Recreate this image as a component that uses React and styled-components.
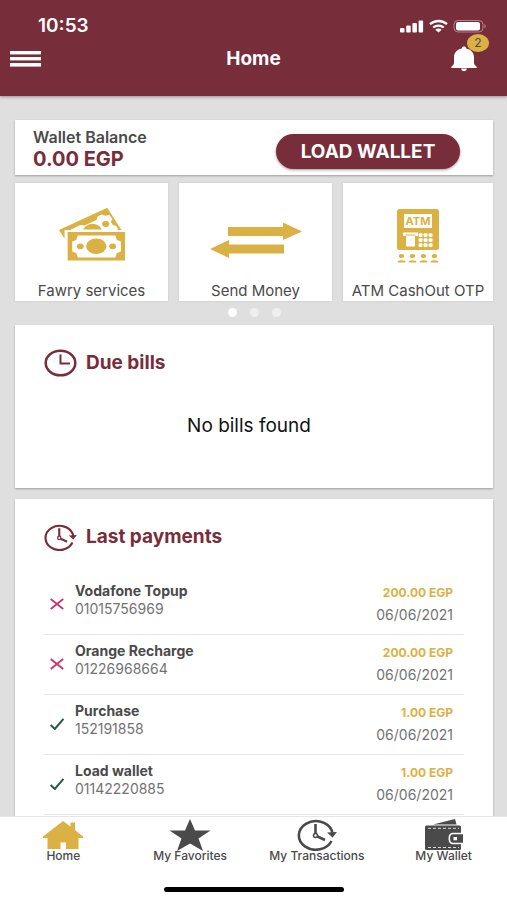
import React from "react";
import styled, { createGlobalStyle, ThemeProvider } from "styled-components";

const theme = {
  maroon: "#782d3b",
  gold: "#dcb143",
  dark: "#4a4a4a",
  gray: "#737373",
  line: "#e6e6e6",
  page: "#dfdfdf",
};

const GlobalStyle = createGlobalStyle`
  * {
    box-sizing: border-box;
  }
  body {
    margin: 0;
    background-color: ${theme.page};
    font-family: Inter, "Liberation Sans", sans-serif;
  }
  button {
    border: 0;
    padding: 0;
    background: none;
    font-family: inherit;
    cursor: pointer;
  }
  svg {
    display: block;
    flex: none;
  }
`;

const Screen = styled.div`
  display: flex;
  flex-direction: column;
  height: 100vh;
  overflow: hidden;
`;

const Header = styled.header`
  flex: none;
  padding: 14px 18px 16px 10px;
  background-color: ${({ theme }) => theme.maroon};
  color: #fff;
  box-shadow: 0 1px 3px rgba(0, 0, 0, 0.35);
`;

const StatusBar = styled.div`
  display: flex;
  align-items: center;
  justify-content: space-between;
  height: 24px;
  padding: 0 2px 0 28px;
  font-size: 19px;
  font-weight: 600;
  line-height: 24px;
`;

const StatusIcons = styled.div`
  display: flex;
  gap: 5px;
`;

const TitleBar = styled.div`
  display: grid;
  grid-template-columns: 40px 1fr 40px;
  align-items: center;
  height: 42px;
`;

const Title = styled.h1`
  margin: 0;
  padding-left: 8px;
  font-size: 19px;
  font-weight: 700;
  line-height: 24px;
  text-align: center;
`;

const BellButton = styled.button`
  position: relative;
  justify-self: end;
  padding-right: 12px;
`;

const Badge = styled.span`
  position: absolute;
  top: -12px;
  right: 0;
  width: 22px;
  height: 18px;
  border-radius: 50%;
  background-color: ${({ theme }) => theme.gold};
  color: ${({ theme }) => theme.dark};
  font-size: 12px;
  line-height: 18px;
  text-align: center;
`;

const Content = styled.main`
  flex: 1;
  min-height: 0;
  overflow: hidden;
  padding: 24px 14px 0 15px;
`;

const Card = styled.section`
  background-color: #fff;
  box-shadow: 0 1px 2px rgba(0, 0, 0, 0.3);
`;

const Balance = styled(Card)`
  display: flex;
  align-items: center;
  justify-content: space-between;
  height: 55px;
  padding: 2px 33px 0 18px;
`;

const BalanceLabel = styled.div`
  color: ${({ theme }) => theme.dark};
  font-size: 16px;
  font-weight: 600;
  line-height: 20px;
`;

const BalanceAmount = styled.div`
  color: ${({ theme }) => theme.maroon};
  font-size: 20px;
  font-weight: 700;
  line-height: 24px;
`;

const LoadButton = styled.button`
  width: 184px;
  height: 35px;
  margin-top: 6px;
  border-radius: 18px;
  background-color: ${({ theme }) => theme.maroon};
  color: #fff;
  font-size: 19px;
  font-weight: 700;
  box-shadow: 0 1px 3px rgba(0, 0, 0, 0.4);
`;

const Tiles = styled.div`
  display: grid;
  grid-template-columns: 153fr 153fr 150fr;
  gap: 11px;
  margin-top: 8px;
`;

const Tile = styled.button`
  display: flex;
  flex-direction: column;
  align-items: center;
  height: 118px;
  padding-top: 24px;
  background-color: #fff;
  box-shadow: 0 0 2px rgba(0, 0, 0, 0.12);
  color: ${({ theme }) => theme.dark};
  font-size: 15px;
  line-height: 20px;
  white-space: nowrap;
  svg {
    margin-bottom: 18px;
  }
`;

const Dots = styled.div`
  display: flex;
  justify-content: center;
  gap: 13px;
  padding: 7px 0 8px;
`;

const Dot = styled.span`
  width: 9px;
  height: 9px;
  border-radius: 50%;
  background-color: ${({ $active }) => ($active ? "#fff" : "#efefef")};
`;

const DueBills = styled(Card)`
  height: 163px;
  padding: 21px 29px;
`;

const Payments = styled(Card)`
  margin-top: 11px;
  padding: 21px 29px;
`;

const CardTitle = styled.h2`
  display: flex;
  align-items: center;
  gap: 9px;
  height: 34px;
  margin: 0;
  color: ${({ theme }) => theme.maroon};
  font-size: 19px;
  font-weight: 700;
  line-height: 24px;
`;

const Empty = styled.p`
  margin: 34px 0 0;
  padding-right: 10px;
  color: #111;
  font-size: 19px;
  line-height: 24px;
  text-align: center;
`;

const List = styled.ul`
  margin: 21px 0 0;
  padding: 0;
  list-style: none;
`;

const Row = styled.li`
  display: flex;
  height: 60px;
  padding: 7px 11px 0 6px;
  border-bottom: 1px solid ${({ theme }) => theme.line};
  svg {
    margin: 16px 11px 0 0;
  }
`;

const RowText = styled.div`
  flex: 1;
`;

const RowSide = styled.div`
  padding-top: 2px;
  text-align: right;
`;

const Name = styled.div`
  color: ${({ theme }) => theme.dark};
  font-size: 14px;
  font-weight: 700;
  line-height: 18px;
`;

const Detail = styled.div`
  color: ${({ theme }) => theme.gray};
  font-size: 14px;
  line-height: 18px;
`;

const Amount = styled.div`
  color: ${({ theme }) => theme.gold};
  font-size: 12px;
  font-weight: 700;
  line-height: 18px;
`;

const PayDate = styled(Detail)`
  line-height: 26px;
`;

const TabBar = styled.nav`
  position: relative;
  flex: none;
  display: grid;
  grid-template-columns: repeat(4, 1fr);
  height: 84px;
  padding-top: 4px;
  border-top: 1px solid ${({ theme }) => theme.line};
  background-color: #fff;
`;

const Tab = styled.button`
  display: flex;
  flex-direction: column;
  align-items: center;
  align-self: start;
  color: ${({ theme }) => theme.dark};
  font-size: 12px;
  font-weight: 500;
  line-height: 14px;
  svg {
    color: ${({ theme, $active }) => ($active ? theme.gold : theme.dark)};
  }
`;

const TabIcon = styled.span`
  display: flex;
  align-items: center;
  height: 28px;
`;

const HomeIndicator = styled.span`
  position: absolute;
  bottom: 8px;
  left: 50%;
  width: 180px;
  height: 5px;
  margin-left: -90px;
  border-radius: 3px;
  background-color: #000;
`;

const SignalIcon = () => (
  <svg width="24" height="14" viewBox="0 0 24 14" fill="#fff">
    <rect x="0" y="9" width="4.5" height="4.5" rx="1" />
    <rect x="6.2" y="6.5" width="4.5" height="7" rx="1" />
    <rect x="12.4" y="4" width="4.5" height="9.5" rx="1" />
    <rect x="18.6" y="1.5" width="4.5" height="12" rx="1" />
  </svg>
);

const WifiIcon = () => (
  <svg width="19" height="14" viewBox="0 0 19 14" fill="none" stroke="#fff">
    <path d="M1 5.2C5.8.9 13.2.9 18 5.2" strokeWidth="2.3" />
    <path d="M4.2 8.5c3-2.6 7.6-2.6 10.6 0" strokeWidth="2.2" />
    <path d="M9.5 13.5L6.3 10.7c1.9-1.5 4.5-1.5 6.4 0z" fill="#fff" stroke="none" />
  </svg>
);

const BatteryIcon = () => (
  <svg width="34" height="14" viewBox="0 0 34 14">
    <rect x="1" y="1.5" width="29" height="11.5" rx="4" fill="none" stroke="#fff" strokeOpacity=".4" />
    <rect x="3" y="3" width="24" height="8.5" rx="2.2" fill="#fff" />
    <path d="M31.5 5.2c1.5.5 1.5 3.6 0 4.1z" fill="#fff" fillOpacity=".5" />
  </svg>
);

const MenuIcon = () => (
  <svg width="31" height="18" viewBox="0 0 31 18" fill="#fff">
    <rect y="1" width="31" height="3.4" />
    <rect y="7" width="31" height="3.4" />
    <rect y="13" width="31" height="3.6" />
  </svg>
);

const BellIcon = () => (
  <svg width="26" height="26" viewBox="0 0 26 26" fill="#fff">
    <path d="M10.8 2.5C10.8-.1 15.2-.1 15.2 2.5 20 3.4 23 6.5 23 11.5v5.2c0 1.8 1 2.5 2.7 4V22H.3v-1.3c1.7-1.5 2.7-2.2 2.7-4v-5.2C3 6.5 6 3.4 10.8 2.5z" />
    <path d="M10.2 22.5h5.600c0 3.500-5.600 3.500-5.600 0z" />
  </svg>
);

const CashIcon = () => (
  <svg width="66" height="56" viewBox="0 0 65 56" preserveAspectRatio="none" fill={theme.gold}>
    <path d="M0 23L47.500.8 61.500 23z" />
    <path d="M0 23l5.500 8.500V23z" />
    <path
      d="M6 27v-1.500L21 18l4 .5L37 13l1-3.500 4-2 3.500 1.200 4-1 3 4.300-1.500 2.800 2 3.200 3.500 1L58 22v2H7z"
      fill="#fff"
    />
    <path d="M24 22.500c2.500-7.500 15.500-7.500 18 0z" />
    <ellipse cx="46" cy="17" rx="3.500" ry="3" />
    <path d="M8.500 25H65v28.500H8.500z" />
    <path
      d="M18.500 28.500h37l1.500 4.500 4 1.500v10L57 46l-1.500 4.500h-37L17 46l-4-1.500v-10l4-1.500z"
      fill="#fff"
    />
    <ellipse cx="36.700" cy="39.300" rx="10" ry="7.800" />
    <ellipse cx="21" cy="39.300" rx="3.400" ry="2.900" />
    <ellipse cx="52.800" cy="39.300" rx="3.400" ry="2.900" />
  </svg>
);

const TransferIcon = () => (
  <svg width="92" height="56" viewBox="0 0 92 56" fill={theme.gold}>
    <path d="M18 20h55v-4.500L92 24.500 73 33v-4H18z" />
    <path d="M74 46.500H19V51L0 42l19-9v4.500h55z" />
  </svg>
);

const AtmText = styled.text`
  font-family: Inter, sans-serif;
  font-size: 11px;
  font-weight: 700;
  text-anchor: middle;
`;

const AtmIcon = () => (
  <svg width="42" height="56" viewBox="0 0 42 56" fill={theme.gold}>
    <rect y="2" width="42" height="41" rx="2.5" />
    <rect x="7" y="7" width="28" height="14" fill="#fff" />
    <AtmText x="21" y="18">ATM</AtmText>
    <path d="M6 25.500h15V29h-3v10.500H9V29H6z" fill="#fff" />
    <path d="M8.500 27.500h10v1h-10z" />
    {[23.5, 28.5, 33.5].map((x) =>
      [28, 33, 38].map((y) => (
        <rect key={`${x}-${y}`} x={x - 1.9} y={y - 1.8} width="3.9" height="3.7" rx="1" fill="#fff" />
      ))
    )}
    {[4.5, 15.5, 26.5, 37.5].map((x) => (
      <g key={x}>
        <ellipse cx={x} cy="49" rx="2.7" ry="2.1" />
        <path d={`M${x - 4} 55.500q0-2.200 4-2.200t4 2.200z`} />
      </g>
    ))}
  </svg>
);

const ClockIcon = () => (
  <svg width="33" height="28" viewBox="0 0 33 28" fill="none" stroke="currentColor" strokeWidth="2.5">
    <ellipse cx="16.5" cy="14" rx="14.8" ry="12.3" />
    <path d="M16.5 5.500V14.500h9.500" strokeWidth="2" />
  </svg>
);

const HistoryIcon = ({ width = 33, height = 27 }) => (
  <svg
    width={width}
    height={height}
    viewBox="0 0 40 32"
    preserveAspectRatio="none"
    fill="none"
    stroke="currentColor"
    strokeWidth="2.6"
  >
    <path d="M34.500 22A17 14.300 0 1 1 34.800 11.500L35.500 15" />
    <path d="M30 13.500l10-.5-4.500 5.500z" fill="currentColor" stroke="none" />
    <circle cx="18.500" cy="16.500" r="2" strokeWidth="1.5" />
    <path d="M18.500 5v9.500M20.500 17.500l7.500 3.500" />
  </svg>
);

const TabHistoryIcon = () => <HistoryIcon width={40} height={32} />;

const CrossIcon = () => (
  <svg width="14" height="12" viewBox="0 0 14 12" stroke="#c8326b" strokeWidth="1.7">
    <path d="M.7 1l12.500 10M13.200 1L.7 11" />
  </svg>
);

const CheckIcon = () => (
  <svg width="14" height="12" viewBox="0 0 14 12" fill="none" stroke="#265747" strokeWidth="2">
    <path d="M.6 7l4.200 4L13.500.8" />
  </svg>
);

const HomeIcon = () => (
  <svg width="42" height="30" viewBox="0 0 42 30" fill="currentColor">
    <path d="M21 1l7.500 5.700V2.500H33v7.600l8 6.400V18h-4.500v11H24v-6.500h-5.500V29H5.500V18H1v-1.500z" />
  </svg>
);

const StarIcon = () => (
  <svg width="42" height="32" viewBox="0 0 42 32" fill="currentColor">
    <path d="M21 0l5 11.500h15.500l-12 8L34 32 21 24.500 8 32l4.500-12.500-12-8H16z" />
  </svg>
);

const WalletIcon = () => (
  <svg width="38" height="32" viewBox="0 0 38 32" fill="currentColor">
    <path d="M8 5.500L30 0l1.500 5.500z" />
    <rect x="0" y="6.500" width="36" height="24.500" rx="1.5" />
    <path d="M3 9.300h31M3 28.500h31" stroke="#fff" strokeWidth=".8" strokeDasharray="3 2" />
    <path d="M39 14.500H28c-5 0-5 10 0 10h11z" stroke="#fff" strokeWidth="1.5" />
    <rect x="28.500" y="18" width="3.500" height="3.300" fill="#fff" />
  </svg>
);

const services = [
  { label: "Fawry services", Icon: CashIcon },
  { label: "Send Money", Icon: TransferIcon },
  { label: "ATM CashOut OTP", Icon: AtmIcon },
];

const payments = [
  { name: "Vodafone Topup", number: "01015756969", amount: "200.00 EGP", date: "06/06/2021", ok: false },
  { name: "Orange Recharge", number: "01226968664", amount: "200.00 EGP", date: "06/06/2021", ok: false },
  { name: "Purchase", number: "152191858", amount: "1.00 EGP", date: "06/06/2021", ok: true },
  { name: "Load wallet", number: "01142220885", amount: "1.00 EGP", date: "06/06/2021", ok: true },
];

const tabs = [
  { label: "Home", Icon: HomeIcon, active: true },
  { label: "My Favorites", Icon: StarIcon },
  { label: "My Transactions", Icon: TabHistoryIcon },
  { label: "My Wallet", Icon: WalletIcon },
];

function App() {
  return (
    <ThemeProvider theme={theme}>
      <GlobalStyle />
      <Screen>
        <Header>
          <StatusBar>
            <span>10:53</span>
            <StatusIcons>
              <SignalIcon />
              <WifiIcon />
              <BatteryIcon />
            </StatusIcons>
          </StatusBar>
          <TitleBar>
            <button type="button" aria-label="Menu">
              <MenuIcon />
            </button>
            <Title>Home</Title>
            <BellButton type="button" aria-label="Notifications">
              <BellIcon />
              <Badge>2</Badge>
            </BellButton>
          </TitleBar>
        </Header>
        <Content>
          <Balance>
            <div>
              <BalanceLabel>Wallet Balance</BalanceLabel>
              <BalanceAmount>0.00 EGP</BalanceAmount>
            </div>
            <LoadButton type="button">LOAD WALLET</LoadButton>
          </Balance>
          <Tiles>
            {services.map(({ label, Icon }) => (
              <Tile type="button" key={label}>
                <Icon />
                {label}
              </Tile>
            ))}
          </Tiles>
          <Dots>
            <Dot $active />
            <Dot />
            <Dot />
          </Dots>
          <DueBills>
            <CardTitle>
              <ClockIcon />
              Due bills
            </CardTitle>
            <Empty>No bills found</Empty>
          </DueBills>
          <Payments>
            <CardTitle>
              <HistoryIcon />
              Last payments
            </CardTitle>
            <List>
              {payments.map(({ name, number, amount, date, ok }) => (
                <Row key={number}>
                  {ok ? <CheckIcon /> : <CrossIcon />}
                  <RowText>
                    <Name>{name}</Name>
                    <Detail>{number}</Detail>
                  </RowText>
                  <RowSide>
                    <Amount>{amount}</Amount>
                    <PayDate>{date}</PayDate>
                  </RowSide>
                </Row>
              ))}
            </List>
          </Payments>
        </Content>
        <TabBar>
          {tabs.map(({ label, Icon, active }) => (
            <Tab type="button" key={label} $active={active}>
              <TabIcon>
                <Icon />
              </TabIcon>
              {label}
            </Tab>
          ))}
          <HomeIndicator />
        </TabBar>
      </Screen>
    </ThemeProvider>
  );
}

export default App;
